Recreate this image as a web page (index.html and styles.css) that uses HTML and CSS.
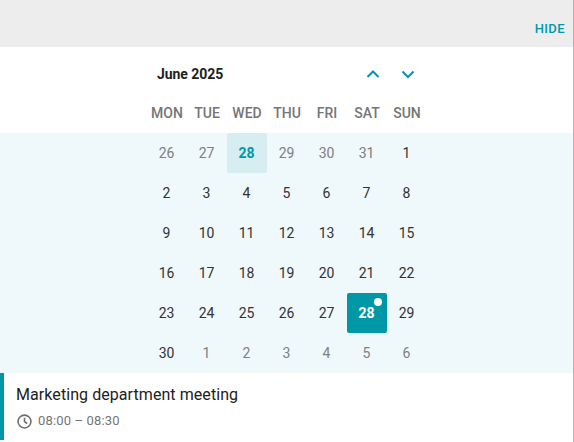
FILE: index.html
```html
<!DOCTYPE html>
<html lang="en">
<head>
<meta charset="utf-8">
<title>Calendar</title>
<link rel="stylesheet" href="styles.css">
</head>
<body>
<div class="panel">
  <div class="topbar"><a class="hide">HIDE</a></div>
  <div class="week-area">
    <div class="month-row">
      <span class="month">June 2025</span>
      <div class="arrows">
        <svg class="arrow" viewBox="0 0 14 14"><path d="M1.5 10 7 4.5 12.5 10"/></svg>
        <svg class="arrow" viewBox="0 0 14 14"><path d="M1.5 4.5 7 10 12.5 4.5"/></svg>
      </div>
    </div>
    <div class="grid names">
      <span>MON</span><span>TUE</span><span>WED</span><span>THU</span><span>FRI</span><span>SAT</span><span>SUN</span>
    </div>
  </div>
  <div class="days-band">
    <div class="grid days">
      <span class="muted">26</span><span class="muted">27</span><span class="today">28</span><span class="muted">29</span><span class="muted">30</span><span class="muted">31</span><span>1</span>
      <span>2</span><span>3</span><span>4</span><span>5</span><span>6</span><span>7</span><span>8</span>
      <span>9</span><span>10</span><span>11</span><span>12</span><span>13</span><span>14</span><span>15</span>
      <span>16</span><span>17</span><span>18</span><span>19</span><span>20</span><span>21</span><span>22</span>
      <span>23</span><span>24</span><span>25</span><span>26</span><span>27</span><span class="selected">28<i class="dot"></i></span><span>29</span>
      <span>30</span><span class="muted">1</span><span class="muted">2</span><span class="muted">3</span><span class="muted">4</span><span class="muted">5</span><span class="muted">6</span>
    </div>
  </div>
  <div class="event">
    <div class="event-title">Marketing department meeting</div>
    <div class="event-time">
      <svg class="clock" viewBox="0 0 14 14"><circle cx="7" cy="7" r="6"/><path d="M7 3.5V7l2.5 2"/></svg>
      <span>08:00 – 08:30</span>
    </div>
  </div>
</div>
</body>
</html>
```
FILE: styles.css
```css
* { box-sizing: border-box; }
html, body { margin: 0; padding: 0; background: #fff; }
body { font-family: Roboto, "Liberation Sans", sans-serif; width: 574px; height: 442px; overflow: hidden; }
.panel { width: 574px; height: 442px; border-right: 1px solid #b5b5b5; }
.topbar { height: 47px; background: #ededed; display: flex; justify-content: flex-end; align-items: flex-end; padding: 0 8px 10px 0; }
.hide { color: #0097a7; font-size: 13px; font-weight: 500; letter-spacing: .4px; line-height: 16px; }
.week-area { height: 86px; }
.month-row { height: 54px; padding-left: 157px; display: flex; align-items: center; }
.month { width: 209px; color: #212121; font-size: 14px; font-weight: 700; letter-spacing: -.05px; }
.arrows { display: flex; gap: 21px; }
.arrow { width: 14px; height: 14px; fill: none; stroke: #0097a7; stroke-width: 2; display: block; }
.grid { display: grid; grid-template-columns: repeat(7, 40px); margin-left: 147px; width: 280px; }
.names span { height: 24px; line-height: 24px; text-align: center; color: #757575; font-size: 14px; font-weight: 500; }
.days-band { height: 240px; background: #eff8fa; }
.days span { position: relative; height: 40px; display: flex; align-items: center; justify-content: center; color: #333; font-size: 14px; padding: 0 1px 1px 0; }
.days .muted { color: #808080; }
.days .today { background: #d6eef1; color: #0097a7; font-weight: 700; border-radius: 2px; }
.days .selected { background: #0097a7; color: #fff; font-weight: 700; border-radius: 2px; }
.dot { position: absolute; top: 5px; right: 5px; width: 8px; height: 8px; border-radius: 50%; background: #fff; }
.event { height: 67px; border-left: 4px solid #0097a7; padding: 12px 0 0 12px; }
.event-title { color: #212121; font-size: 16px; line-height: 20px; letter-spacing: .07px; }
.event-time { display: flex; align-items: center; gap: 6px; margin-top: 7px; color: #757575; font-size: 13px; line-height: 18px; letter-spacing: .15px; }
.clock { width: 15px; height: 15px; fill: none; stroke: #6f6f6f; stroke-width: 1.5; display: block; margin-left: 1px; }
```
